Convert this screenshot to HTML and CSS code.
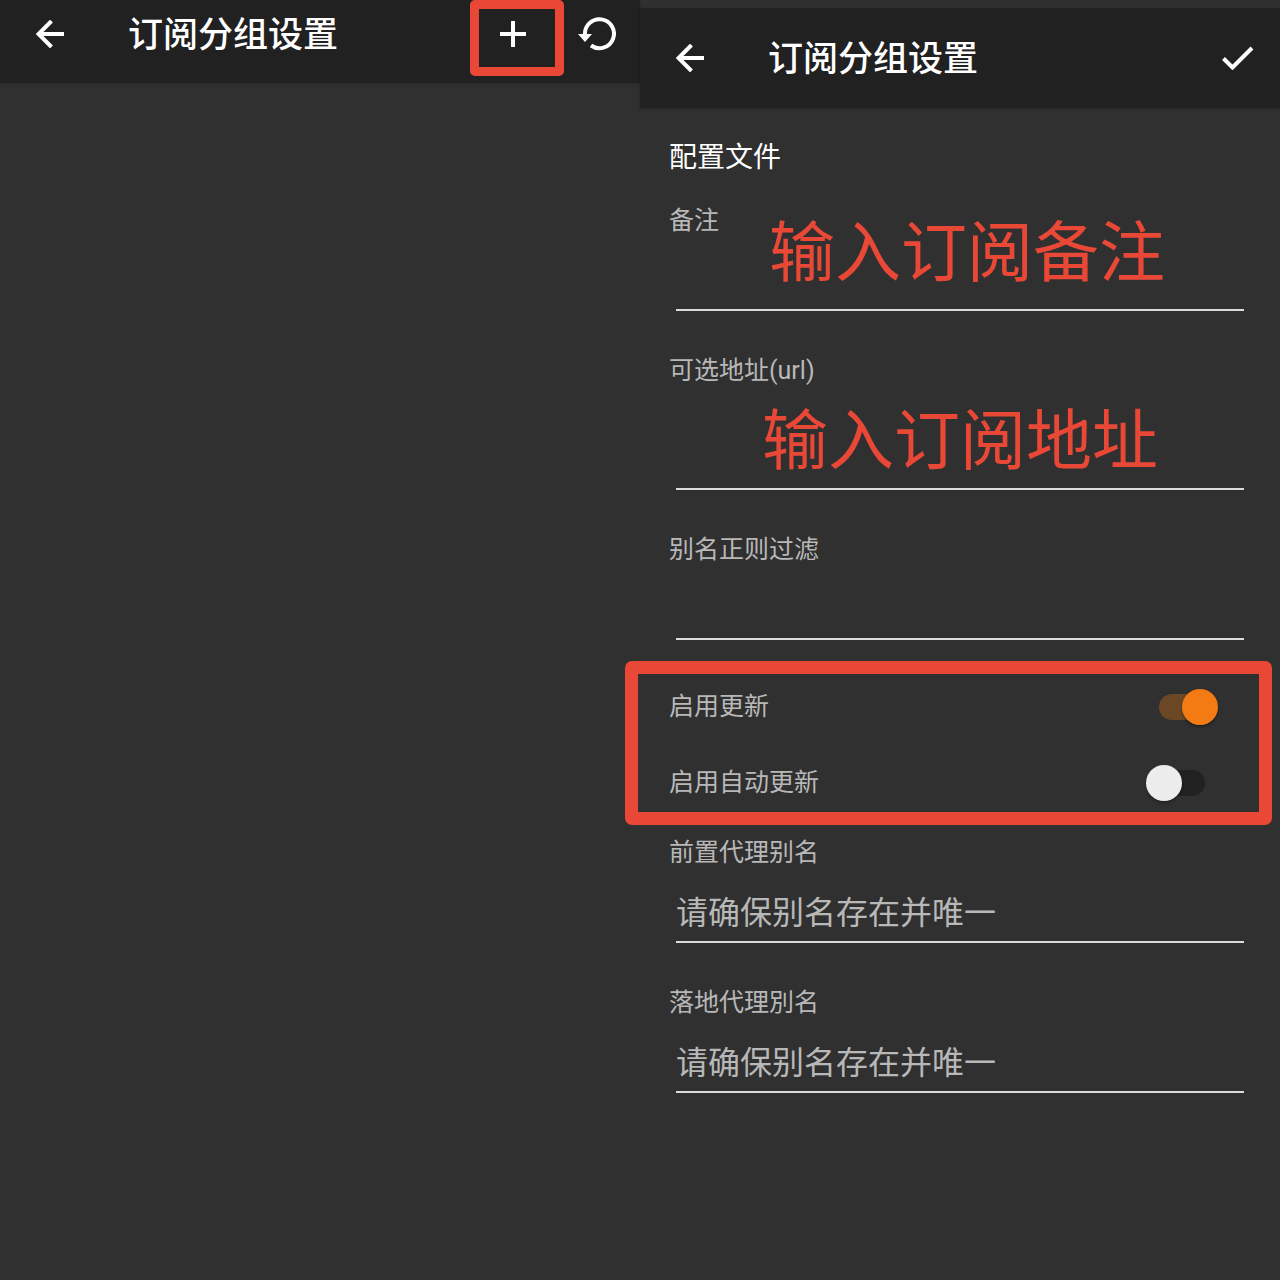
FILE: index.html
```html
<!DOCTYPE html>
<html lang="zh-CN">
<head>
    <meta charset="UTF-8">
    <meta name="viewport" content="width=device-width, initial-scale=1.0">
    <title>订阅分组设置</title>
    <link rel="stylesheet" href="styles.css">
</head>
<body>

<div class="screens">
    <!-- Group list (empty) -->
    <section class="screen">
        <header class="toolbar toolbar-list">
            <button type="button" class="icon-button" aria-label="返回">
                <svg class="icon-back" viewBox="0 0 28 28"><path d="M15.5 1 L2.5 14 L15.5 27 M2.5 14 H28"/></svg>
            </button>
            <h1>订阅分组设置</h1>
            <button type="button" class="icon-button add-button" aria-label="添加">
                <svg class="icon-add" viewBox="0 0 26 26"><path d="M13 0 V26 M0 13 H26"/></svg>
                <span class="mark mark-add"></span>
            </button>
            <button type="button" class="icon-button" aria-label="更新订阅">
                <svg class="icon-restore" viewBox="0 0 38 34">
                    <path d="M7 18 A14.5 14.5 0 1 1 13 28.5"/>
                    <polygon points="0,17 14,17 7,25"/>
                </svg>
            </button>
        </header>
    </section>

    <!-- Group edit form -->
    <section class="screen screen-edit">
        <header class="toolbar">
            <button type="button" class="icon-button" aria-label="返回">
                <svg class="icon-back" viewBox="0 0 28 28"><path d="M15.5 1 L2.5 14 L15.5 27 M2.5 14 H28"/></svg>
            </button>
            <h1>订阅分组设置</h1>
            <button type="submit" form="groupForm" class="icon-button" aria-label="保存">
                <svg class="icon-check" viewBox="0 0 32 24"><path d="M1.5 12.5 L10.5 21.5 L30 2"/></svg>
            </button>
        </header>

        <form id="groupForm" action="#" method="post">
            <h2>配置文件</h2>

            <div class="field">
                <label for="remarks">备注</label>
                <input type="text" id="remarks" name="remarks">
                <span class="note note-remarks">输入订阅备注</span>
            </div>

            <div class="field field-url">
                <label for="url">可选地址(url)</label>
                <input type="text" id="url" name="url">
                <span class="note note-url">输入订阅地址</span>
            </div>

            <div class="field">
                <label for="filter">别名正则过滤</label>
                <input type="text" id="filter" name="filter">
            </div>

            <div class="switches">
                <div class="switch-row">
                    <label for="enable">启用更新</label>
                    <input type="checkbox" id="enable" name="enable" class="switch" checked>
                </div>
                <div class="switch-row">
                    <label for="autoUpdate">启用自动更新</label>
                    <input type="checkbox" id="autoUpdate" name="autoUpdate" class="switch">
                </div>
            </div>

            <div class="field">
                <label for="prevProfile">前置代理别名</label>
                <input type="text" id="prevProfile" name="prevProfile" placeholder="请确保别名存在并唯一">
            </div>

            <div class="field">
                <label for="nextProfile">落地代理別名</label>
                <input type="text" id="nextProfile" name="nextProfile" placeholder="请确保别名存在并唯一">
            </div>
        </form>
    </section>
</div>

</body>
</html>
```

FILE: styles.css
```css
body {
    font-family: Roboto, "Noto Sans CJK SC", sans-serif;
    margin: 0;
    background-color: #303030;
    color: #fff;
}

.screens {
    display: grid;
    grid-template-columns: 1fr 1fr;
    min-height: 100vh;
}

.screen-edit {
    padding-top: 8px;
}

/* Toolbars */
.toolbar {
    display: flex;
    align-items: center;
    height: 100px;
    padding: 0 24px 0 32px;
    box-sizing: border-box;
    background-color: #212121;
    box-shadow: 0 1px 3px rgba(0, 0, 0, 0.2);
}

.toolbar-list {
    height: 83px;
    padding-bottom: 16px;
}

h1 {
    flex: 1;
    margin: 0 0 0 60px;
    padding-top: 4px;
    font-size: 35px;
    line-height: 50px;
    font-weight: 500;
}

.icon-button {
    position: relative;
    display: flex;
    align-items: center;
    justify-content: center;
    min-width: 36px;
    height: 48px;
    padding: 0;
    border: none;
    background: none;
    cursor: pointer;
}

.add-button {
    width: 94px;
    margin-right: 14px;
    padding-right: 9px;
}

svg {
    display: block;
    fill: none;
    stroke: #fff;
    stroke-width: 4;
}

.icon-back {
    width: 28px;
    height: 28px;
}

.icon-add {
    width: 26px;
    height: 26px;
}

.icon-restore {
    width: 38px;
    height: 34px;
}

.icon-restore polygon {
    fill: #fff;
    stroke: none;
}

.icon-check {
    width: 32px;
    height: 24px;
}

/* Red markers and notes drawn over the screens */
.mark {
    border: 9px solid #e94837;
    border-radius: 5px;
    box-sizing: border-box;
}

.mark-add {
    position: absolute;
    top: -10px;
    left: 0;
    width: 94px;
    height: 76px;
}

.note {
    position: absolute;
    font-size: 66px;
    line-height: 80px;
    color: #e94837;
    white-space: nowrap;
    pointer-events: none;
}

.note-remarks {
    top: 12px;
    left: 100px;
}

.note-url {
    top: 50px;
    left: 93px;
}

/* Form */
form {
    padding: 28px 36px 28px 29px;
}

h2 {
    margin: 0 0 22px;
    font-size: 28px;
    line-height: 44px;
    font-weight: 400;
}

label {
    display: block;
    font-size: 25px;
    line-height: 38px;
    color: #b8b8b8;
}

.field {
    position: relative;
    display: flex;
    flex-direction: column;
    margin-bottom: 41px;
}

.field input {
    height: 71px;
    margin-left: 7px;
    padding: 12px 0 0;
    box-sizing: border-box;
    border: none;
    border-bottom: 2px solid #dcdcdc;
    border-radius: 0;
    outline: none;
    background: none;
    color: #fff;
    font-family: inherit;
    font-size: 32px;
}

.field input::placeholder {
    color: #b8b8b8;
    opacity: 1;
}

.field-url input {
    height: 100px;
}

.switches {
    display: flex;
    flex-direction: column;
    gap: 18px;
    margin: -20px -28px 9px -44px;
    padding: 4px 41px 0 31px;
    border: 13px solid #e94837;
    border-radius: 7px;
}

.switch-row {
    display: flex;
    align-items: center;
    justify-content: space-between;
    height: 58px;
}

.switch {
    appearance: none;
    position: relative;
    width: 72px;
    height: 36px;
    margin: 0;
    cursor: pointer;
}

.switch::before {
    content: "";
    position: absolute;
    top: 5px;
    left: 13px;
    width: 46px;
    height: 26px;
    border-radius: 13px;
    background-color: #212121;
}

.switch::after {
    content: "";
    position: absolute;
    top: 0;
    left: 0;
    width: 36px;
    height: 36px;
    border-radius: 50%;
    background-color: #ececec;
    box-shadow: 0 2px 3px rgba(0, 0, 0, 0.3);
}

.switch:checked::before {
    background-color: #6b4726;
}

.switch:checked::after {
    left: 36px;
    background-color: #f47a13;
}
```
